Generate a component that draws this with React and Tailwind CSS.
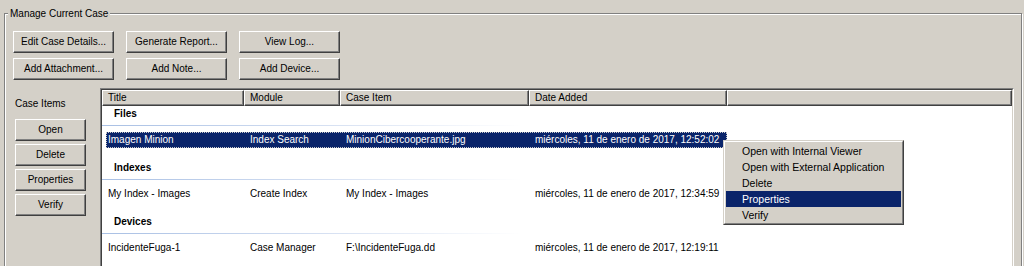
import React from 'react';

const groups = [
    {
        name: 'Files',
        row: ['Imagen Minion', 'Index Search', 'MinionCibercooperante.jpg', 'miércoles, 11 de enero de 2017, 12:52:02'],
        selected: true,
    },
    {
        name: 'Indexes',
        row: ['My Index - Images', 'Create Index', 'My Index - Images', 'miércoles, 11 de enero de 2017, 12:34:59'],
    },
    {
        name: 'Devices',
        row: ['IncidenteFuga-1', 'Case Manager', 'F:\\IncidenteFuga.dd', 'miércoles, 11 de enero de 2017, 12:19:11'],
    },
];

const menuItems = ['Open with Internal Viewer', 'Open with External Application', 'Delete', 'Properties', 'Verify'];

// classic raised win32 button
const Btn = ({ children, className = '' }) => (
    <button
        className={`h-[22px] bg-[#d4d0c8] border border-t-white border-l-white border-r-[#404040] border-b-[#404040] shadow-[inset_-1px_-1px_0_#808080] text-[10px] text-black leading-none whitespace-nowrap ${className}`}
    >
        {children}
    </button>
);

const HeaderCell = ({ children, className = '' }) => (
    <div
        className={`h-[16px] border border-t-white border-l-white border-r-[#404040] border-b-[#404040] shadow-[inset_-1px_-1px_0_#808080] pl-[5px] leading-[14px] whitespace-nowrap overflow-hidden ${className}`}
    >
        {children}
    </div>
);

const App = () => {
    return (
        <div className="relative w-[1024px] h-[266px] overflow-hidden bg-[#d4d0c8] pt-[13px] pl-[4px] pr-[2px] font-['Liberation_Sans',Arial,sans-serif] text-[10px] text-black">
            <div className="h-[300px] border border-[#808080] shadow-[inset_1px_1px_0_#fff,1px_1px_0_#fff] flex flex-col">
                {/* legend */}
                <div className="relative -mt-[7px] ml-[3px] w-fit px-[2px] bg-[#d4d0c8] leading-[13px]">
                    Manage Current Case
                </div>

                <div className="mt-[11px] pl-[8px] grid grid-cols-[101px_101px_101px] gap-x-[12px] gap-y-[5px]">
                    <Btn>Edit Case Details...</Btn>
                    <Btn>Generate Report...</Btn>
                    <Btn>View Log...</Btn>
                    <Btn>Add Attachment...</Btn>
                    <Btn>Add Note...</Btn>
                    <Btn>Add Device...</Btn>
                </div>

                <div className="mt-[8px] flex flex-1">
                    {/* case items buttons */}
                    <div className="w-[95px] pl-[10px] pt-[9px]">
                        <div className="leading-[13px]">Case Items</div>
                        <div className="mt-[9px] flex flex-col gap-[3px] w-[71px]">
                            <Btn>Open</Btn>
                            <Btn>Delete</Btn>
                            <Btn>Properties</Btn>
                            <Btn>Verify</Btn>
                        </div>
                    </div>

                    {/* list view */}
                    <div className="flex-1 mr-[7px] border border-[#808080] border-r-white border-b-white">
                        <div className="h-full border border-[#404040] border-r-[#d4d0c8] border-b-[#d4d0c8] bg-white">
                            <div className="flex bg-[#d4d0c8]">
                                <HeaderCell className="w-[142px]">Title</HeaderCell>
                                <HeaderCell className="w-[96px]">Module</HeaderCell>
                                <HeaderCell className="w-[189px]">Case Item</HeaderCell>
                                <HeaderCell className="w-[198px]">Date Added</HeaderCell>
                                <HeaderCell className="flex-1"></HeaderCell>
                            </div>

                            {groups.map((g) => (
                                <div key={g.name} className="mb-[12px]">
                                    <div className="h-[16px] leading-[16px] pl-[12px] font-bold">{g.name}</div>
                                    <div className="mt-[3px] h-px w-[420px] bg-linear-to-r from-[#a9c0e4] via-[#d3def1] to-transparent"></div>
                                    <div
                                        className={`mt-[6px] ml-[4px] w-[621px] h-[16px] flex leading-[14px] whitespace-nowrap border ${
                                            g.selected
                                                ? 'bg-[#0a246a] text-white border-dotted border-[#c8c8c8]'
                                                : 'border-transparent'
                                        }`}
                                    >
                                        <div className="w-[137px] pl-[1px] overflow-hidden">{g.row[0]}</div>
                                        <div className="w-[96px] pl-[6px] overflow-hidden">{g.row[1]}</div>
                                        <div className="w-[189px] pl-[6px] overflow-hidden">{g.row[2]}</div>
                                        <div className="flex-1 pl-[6px] overflow-hidden">{g.row[3]}</div>
                                    </div>
                                </div>
                            ))}
                        </div>
                    </div>
                </div>
            </div>

            {/* context menu */}
            <div className="absolute left-[723px] top-[140px] w-[181px] border border-t-[#d4d0c8] border-l-[#d4d0c8] border-r-[#404040] border-b-[#404040] bg-[#d4d0c8]">
                <div className="border border-t-white border-l-white border-r-[#808080] border-b-[#808080] p-[1px] pb-0 text-[10.5px]">
                    {menuItems.map((item) => (
                        <div
                            key={item}
                            className={`h-[16px] leading-[16px] pl-[16px] whitespace-nowrap ${
                                item === 'Properties' ? 'bg-[#0a246a] text-white' : ''
                            }`}
                        >
                            {item}
                        </div>
                    ))}
                </div>
            </div>
        </div>
    );
};

export default App;
